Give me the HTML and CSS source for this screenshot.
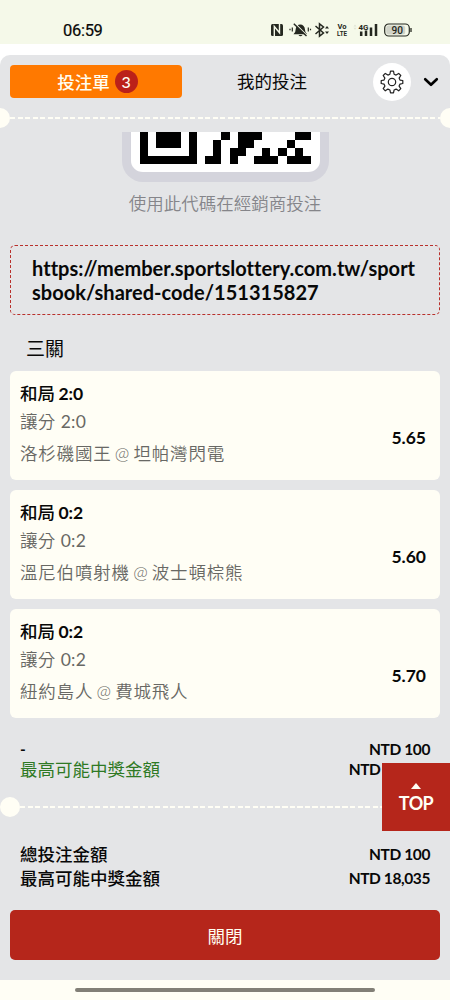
FILE: index.html
```html
<!DOCTYPE html>
<html lang="zh-Hant">
<head>
<meta charset="utf-8">
<title>投注單</title>
<link rel="stylesheet" href="styles.css">
</head>
<body>
<header class="status">
  <time class="clock">06:59</time>
  <svg class="status-icons" width="146" height="20" viewBox="0 0 146 20">
    <rect x="1" y="4" width="12" height="12" rx="1.500" fill="#252820"/>
    <path d="M4.300 16V6.500L9.500 12.800V4" fill="none" stroke="#f5f9e9" stroke-width="1.400"/>
    <path d="M23.500 14.200q2.200-1.500 2.200-5a4.300 4.300 0 0 1 9.200 0q0 3.500 2.200 5zM28.500 15h4q-2 2.600-4 0z" fill="#252820"/>
    <path d="M24.800 3.200l12 12" stroke="#f5f9e9" stroke-width="1.300"/>
    <path d="M23.800 3.800l12.700 12.200" stroke="#252820" stroke-width="1.400"/>
    <path d="M22.300 7.500v4M20 8.700v1.600M38.300 7.500v4M40.500 8.700v1.600" stroke="#252820" stroke-width="1.200"/>
    <path d="M45.500 6l8 7-4 3.200V3.800l4 3.200-8 7" fill="none" stroke="#252820" stroke-width="1.500"/>
    <path d="M55 8.500h4l-2-2.500zM55 11.500h4l-2 2.500z" fill="#252820"/>
    <text class="tiny" x="67.500" y="9" textLength="9" lengthAdjust="spacingAndGlyphs">Vo</text>
    <text class="tiny" x="67" y="16.200" textLength="10" lengthAdjust="spacingAndGlyphs">LTE</text>
    <path d="M83.500 6.500l1.500-2 1.500 2zM83.500 7.800l1.500 2 1.500-2z" fill="#dfe3d3"/>
    <text class="tiny tiny-4g" x="88.500" y="9.500" textLength="10" lengthAdjust="spacingAndGlyphs">4G</text>
    <path d="M91.200 11.500V16M96 10.500V16M101 7.500V16M106 4V16" stroke="#252820" stroke-width="2.500"/>
    <rect x="114.700" y="4" width="24.600" height="12" rx="4" fill="#f5f9e9" stroke="#252820" stroke-width="1.200"/>
    <rect x="116.200" y="5.500" width="19" height="9" rx="2.500" fill="#d0d3c8"/>
    <path d="M141 8v4" stroke="#252820" stroke-width="1.300"/>
    <text class="battery" x="121.500" y="14" textLength="11.500" lengthAdjust="spacingAndGlyphs">90</text>
  </svg>
</header>

<main class="sheet">
  <nav class="tabs">
    <button class="tab tab-active">投注單<span class="count">3</span></button>
    <button class="tab">我的投注</button>
    <button class="settings" aria-label="設定">
      <svg width="24" height="24" viewBox="0 0 24 24" fill="none" stroke="#222" stroke-width="1.200" stroke-linejoin="round">
        <path d="M10.500 1.200h3l.6 3 2 .9 2.600-1.700 2.100 2.100-1.700 2.600.9 2 2.800.4v3l-2.800.6-.9 2 1.700 2.600-2.100 2.100-2.600-1.700-2 .9-.6 2.800h-3l-.6-2.800-2-.9-2.600 1.700-2.100-2.100 1.700-2.600-.9-2-2.800-.6v-3l2.800-.4.9-2-1.700-2.600 2.100-2.100 2.600 1.700 2-.9z"/>
        <circle cx="12" cy="12" r="3.700"/>
      </svg>
    </button>
    <svg class="chevron" width="16" height="12" viewBox="0 0 16 12"><path d="M2.200 3.200l5.800 5.600 5.800-5.600" fill="none" stroke="#000" stroke-width="2.600" stroke-linecap="round" stroke-linejoin="round"/></svg>
  </nav>

  <div class="tear tear-top"><i class="notch"></i><span class="dashes"></span><i class="notch"></i></div>

  <section class="qr">
    <div class="qr-frame">
      <svg width="171" height="32" viewBox="0 0 21 4" preserveAspectRatio="none" shape-rendering="crispEdges">
        <path d="M0 0h1v3h5V0h1v4H0zM2 0h3v2H2zM10 0h1v1h-1zM12 0h3v1h-1v1h-1v1h-1v1h-1V2h1zM19 0h2v1h-2zM9 1h1v3H8V3h1zM18 1h1v1h-1zM15 2h1v1h1v1h-3V3h1zM17 2h1v1h-1zM19 2h1v1h1v1h-3V3h1z"/>
      </svg>
    </div>
    <p class="qr-caption">使用此代碼在經銷商投注</p>
  </section>

  <p class="link">https://member.sportslottery.com.tw/sportsbook/shared-code/151315827</p>

  <h2 class="parlay">三關</h2>

  <ul class="bets">
    <li class="bet">
      <div><p class="pick">和局 <b>2:0</b></p><p class="market">讓分 <span>2:0</span></p><p class="match">洛杉磯國王 @ 坦帕灣閃電</p></div>
      <b class="odds">5.65</b>
    </li>
    <li class="bet">
      <div><p class="pick">和局 <b>0:2</b></p><p class="market">讓分 <span>0:2</span></p><p class="match">溫尼伯噴射機 @ 波士頓棕熊</p></div>
      <b class="odds">5.60</b>
    </li>
    <li class="bet">
      <div><p class="pick">和局 <b>0:2</b></p><p class="market">讓分 <span>0:2</span></p><p class="match">紐約島人 @ 費城飛人</p></div>
      <b class="odds">5.70</b>
    </li>
  </ul>

  <section class="sums stake">
    <p class="sum"><b>-</b><b>NTD 100</b></p>
    <p class="sum"><span class="win">最高可能中獎金額</span><b>NTD 18,035</b></p>
  </section>

  <div class="tear tear-bottom"><i class="notch"></i><span class="dashes"></span></div>

  <section class="sums total">
    <p class="sum"><span>總投注金額</span><b>NTD 100</b></p>
    <p class="sum"><span>最高可能中獎金額</span><b>NTD 18,035</b></p>
  </section>

  <button class="close">關閉</button>
</main>

<footer class="gesture"><span class="handle"></span></footer>
<a class="top"><svg width="10" height="6" viewBox="0 0 10 6"><path d="M0 6l5-6 5 6z" fill="#fffef5"/></svg>TOP</a>
</body>
</html>
```
FILE: styles.css
```css
* { box-sizing: border-box; }
body {
  margin: 0;
  width: 450px;
  height: 1000px;
  overflow: hidden;
  position: relative;
  background: #fffef5;
  color: #080808;
  font-family: Lato, "Noto Sans CJK TC", sans-serif;
  font-size: 17.500px;
}
p, h2, ul { margin: 0; padding: 0; }
button { border: 0; padding: 0; background: none; color: inherit; font: inherit; }

.status {
  height: 44px;
  padding: 20px 34px 0 63px;
  display: flex;
  justify-content: space-between;
  background: #f5f9e9;
}
.clock { font: 400 16.500px/21px Roboto, sans-serif; letter-spacing: -.3px; -webkit-text-stroke: .2px; }
.status-icons { flex: none; }
.tiny { font: 700 7px Roboto, sans-serif; fill: #252820; }
.tiny-4g { font-size: 8px; }
.battery { font: 500 10.500px Roboto, sans-serif; fill: #252820; }

.sheet {
  height: 925px;
  margin-top: 11px;
  background: #e4e5e7;
  border-radius: 10px 10px 0 0;
  box-shadow: 0 -11px 0 11px #fff;
  clip-path: inset(-11px 0 0 0);
}

.tabs { display: flex; align-items: center; height: 53px; padding: 0 10px; }
.tab { width: 172px; height: 33px; padding-bottom: 2px; border-radius: 4px; }
.tab + .tab { width: 180px; }
.tab-active {
  display: flex;
  align-items: center;
  justify-content: center;
  gap: 5px;
  padding: 0 0 1px 3px;
  background: #ff7900;
  color: #fffef0;
  font-weight: 500;
}
.count {
  width: 23px;
  height: 23px;
  border-radius: 50%;
  background: #bb2119;
  font: 500 16px/23px Lato, sans-serif;
}
.settings {
  display: grid;
  place-items: center;
  flex: none;
  width: 38px;
  height: 38px;
  margin-left: 11px;
  border-radius: 50%;
  background: #fff;
}
.chevron { flex: none; margin-left: 11.500px; }

.tear { display: flex; align-items: center; height: 20px; }
.notch { flex: none; width: 20px; height: 20px; border-radius: 50%; background: #fffef5; }
.dashes {
  flex: 1;
  height: 2.500px;
  background: repeating-linear-gradient(90deg, #fffef5 0 5px, transparent 5px 7.500px);
}
.tear-top { margin: 0 -10px; }
.tear-bottom { margin-top: 17px; }

.qr { padding-top: 4px; text-align: center; }
.qr-frame {
  width: 207px;
  height: 50px;
  margin: 0 auto;
  border: solid #d4d4dc;
  border-width: 0 9.500px 10px;
  border-radius: 0 0 21px 21px;
  background: #fff;
  display: flex;
  justify-content: center;
}
.qr-caption { margin-top: 9px; line-height: 26px; font-weight: 350; color: #85858a; }

.link {
  height: 70px;
  margin: 28px 10px 0;
  padding: 10px 20px 0 21px;
  border: 1px dashed #b8302c;
  border-radius: 5px;
  font: 700 20px/24px Lato, sans-serif;
  letter-spacing: .03px;
  word-break: break-all;
}
.parlay { margin: 19px 0 0 26px; font-size: 19px; line-height: 30px; font-weight: 400; }

.bets { display: grid; gap: 10px; margin: 7px 10px 0; list-style: none; }
.bet {
  height: 109px;
  padding: 9px 14px 0 10px;
  display: flex;
  justify-content: space-between;
  border-radius: 6px;
  background: #fffef5;
}
.pick { line-height: 28px; font-weight: 500; word-spacing: -1px; }
.market { line-height: 28px; font-weight: 350; color: #686864; letter-spacing: .3px; }
.market span { font-weight: 400; }
.match { margin-top: 4px; line-height: 28px; font-weight: 350; color: #686864; letter-spacing: .8px; word-spacing: -2.200px; }
.odds { margin-top: 46px; line-height: 24px; font-size: 17.500px; }

.sums { padding: 0 20px; }
.sum { display: flex; justify-content: space-between; line-height: 24px; font-weight: 500; }
.sum b { margin-top: -1px; font-size: 15.500px; letter-spacing: -.4px; }
.stake { margin-top: 22px; }
.stake .sum { line-height: 20px; height: 20px; }
.total .sum { height: 24px; }
.win { color: #2e7924; font-weight: 400; }
.total { margin-top: 26px; }

.close {
  display: block;
  width: 430px;
  height: 50px;
  margin: 19px auto 0;
  border-radius: 5px;
  background: #b5261b;
  color: #fffef0;
}
.gesture { height: 20px; padding-top: 7.500px; }
.handle { display: block; width: 300px; height: 4px; margin: 0 auto; border-radius: 2px; background: #827f77; }

.top {
  position: absolute;
  right: 0;
  top: 763px;
  width: 68px;
  height: 68px;
  padding-top: 20px;
  display: flex;
  flex-direction: column;
  align-items: center;
  gap: 3px;
  background: #b5261b;
  color: #fffef5;
  font-size: 18px;
  letter-spacing: -.6px;
  font-weight: 700;
  line-height: 22px;
}
```
